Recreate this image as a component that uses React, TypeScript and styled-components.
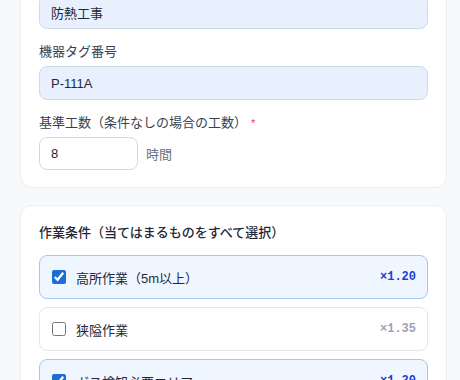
import styled, { createGlobalStyle } from "styled-components";

const GlobalStyle = createGlobalStyle`
	html, body {
		margin: 0;
		padding: 0;
		background: #f8f9fb;
		font-family: "Liberation Sans", "Noto Sans CJK JP", sans-serif;
		color: #1f2937;
	}
	* { box-sizing: border-box; }
`;

type ICondition = { name: string; factor: string; checked: boolean };

const conditions: ICondition[] = [
	{ name: "高所作業（5m以上）", factor: "×1.20", checked: true },
	{ name: "狭隘作業", factor: "×1.35", checked: false },
	{ name: "ガス検知必要エリア", factor: "×1.20", checked: true },
];

export default function App() {
	return (
		<>
			<GlobalStyle />
			<Page>
				<Card>
					<Field>
						<Label>工事区分</Label>
						<Input readOnly value="防熱工事" />
					</Field>
					<Field>
						<Label>機器タグ番号</Label>
						<Input readOnly value="P-111A" />
					</Field>
					<Field>
						<Label>
							基準工数（条件なしの場合の工数）<Required>*</Required>
						</Label>
						<InlineRow>
							<SmallInput readOnly value="8" />
							<Unit>時間</Unit>
						</InlineRow>
					</Field>
				</Card>
				<Card>
					<SectionTitle>作業条件（当てはまるものをすべて選択）</SectionTitle>
					<ConditionList>
						{conditions.map((c) => (
							<ConditionItem key={c.name} $checked={c.checked}>
								<Checkbox type="checkbox" defaultChecked={c.checked} />
								<ConditionName>{c.name}</ConditionName>
								<Factor $checked={c.checked}>{c.factor}</Factor>
							</ConditionItem>
						))}
					</ConditionList>
				</Card>
			</Page>
		</>
	);
}

const Page = styled.div`
	margin-top: -47px;
	padding: 0 13px 0 20px;
	display: flex;
	flex-direction: column;
	gap: 17px;
`;

const Card = styled.div`
	background: #ffffff;
	border: 1px solid #eceef2;
	border-radius: 12px;
	padding: 17px 18px 17px;
	display: flex;
	flex-direction: column;
	gap: 13px;
`;

const Field = styled.div`
	display: flex;
	flex-direction: column;
	gap: 4px;
`;

const Label = styled.label`
	font-size: 13px;
	line-height: 20px;
	color: #374151;
`;

const Required = styled.span`
	color: #ef4444;
	font-size: 11px;
	margin-left: 4px;
	vertical-align: top;
`;

const Input = styled.input`
	width: 100%;
	height: 34px;
	padding: 0 11px;
	font-family: inherit;
	font-size: 13px;
	color: #1f2937;
	background: #e8f0fe;
	border: 1px solid #cfd9ea;
	border-radius: 8px;
	outline: none;
`;

const InlineRow = styled.div`
	display: flex;
	align-items: center;
	gap: 8px;
`;

const SmallInput = styled(Input)`
	width: 99px;
	height: 33px;
	background: #ffffff;
	border-color: #d4d8de;
`;

const Unit = styled.span`
	font-size: 13px;
	color: #6b7280;
`;

const SectionTitle = styled.h3`
	margin: 0 0 -1px;
	font-size: 13px;
	line-height: 20px;
	font-weight: 500;
	color: #1f2937;
`;

const ConditionList = styled.div`
	display: flex;
	flex-direction: column;
	gap: 8px;
`;

const ConditionItem = styled.label<{ $checked: boolean }>`
	display: flex;
	align-items: center;
	height: 44px;
	padding: 0 11px;
	border-radius: 8px;
	border: 1px solid ${({ $checked }) => ($checked ? "#a8c7ef" : "#e6e8ec")};
	background: ${({ $checked }) => ($checked ? "#eff6ff" : "#ffffff")};
`;

const Checkbox = styled.input`
	width: 14px;
	height: 14px;
	margin: 0 10px 0 1px;
	accent-color: #1a6fd6;
`;

const ConditionName = styled.span`
	flex: 1;
	font-size: 13px;
	color: #1f2937;
`;

const Factor = styled.span<{ $checked: boolean }>`
	font-family: "Liberation Mono", "DejaVu Sans Mono", monospace;
	font-size: 12px;
	font-weight: 700;
	color: ${({ $checked }) => ($checked ? "#1d3fcf" : "#9ca3af")};
`;
